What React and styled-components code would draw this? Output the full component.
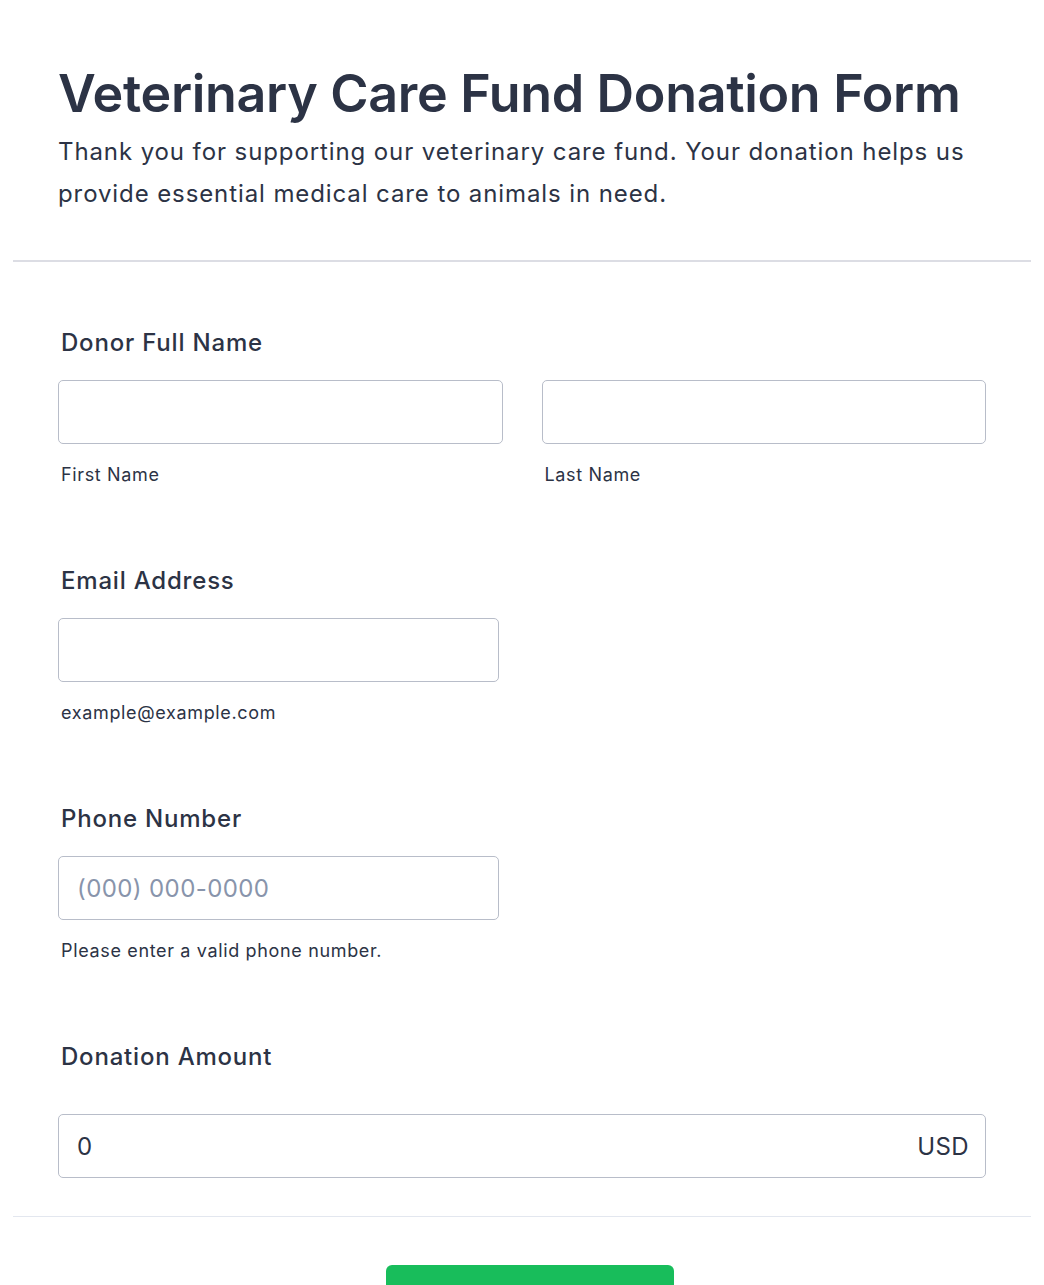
import styled, { createGlobalStyle } from 'styled-components'

const GlobalStyle = createGlobalStyle`
  body {
    margin: 0;
    background: #fff;
    font-family: Inter, "Noto Sans", sans-serif;
    color: #2c3345;
  }
  * { box-sizing: border-box; }
`

const Card = styled.div`
  margin: 0 13px;
  padding-bottom: 40px;
`

const Header = styled.header`
  padding: 63px 45px 45px;
  border-bottom: 2px solid #dcdde4;
`

const Title = styled.h1`
  margin: 0;
  font-size: 52px;
  line-height: 62px;
  font-weight: 600;
  letter-spacing: -0.32px;
`

const Description = styled.p`
  margin: 6px 0 0;
  font-size: 24px;
  line-height: 42px;
  font-weight: 400;
  letter-spacing: 0.9px;
`

const Fields = styled.div`
  padding: 66px 45px 38px;
  display: flex;
  flex-direction: column;
  gap: 80px;
`

const Field = styled.div`
  display: flex;
  flex-direction: column;
`

const Label = styled.label`
  font-size: 24px;
  line-height: 29px;
  font-weight: 500;
  letter-spacing: 0.8px;
  padding-left: 3px;
  margin-bottom: ${props => props.gap || 23}px;
`

const Row = styled.div`
  display: flex;
  gap: 39px;
`

const Col = styled.div`
  display: flex;
  flex-direction: column;
  width: ${props => props.width || 'auto'};
  flex: ${props => props.grow ? 1 : 'none'};
`

const Input = styled.div`
  height: 64px;
  border: 1px solid #b8bdc9;
  border-radius: 5px;
  background: #fff;
  display: flex;
  align-items: center;
  justify-content: space-between;
  padding: 0 16px 0 18px;
  font-size: 24px;
  letter-spacing: 0.4px;
  color: ${props => props.placeholder ? '#8894ab' : '#2c3345'};
`

const Sublabel = styled.span`
  margin-top: 20px;
  padding-left: 3px;
  font-size: 18px;
  line-height: 22px;
  letter-spacing: 0.65px;
`

const Footer = styled.div`
  border-top: 1px solid #e3e7ef;
  padding: 48px 0 0 16px;
  display: flex;
  justify-content: center;
`

const SubmitButton = styled.button`
  width: 288px;
  height: 60px;
  border: none;
  border-radius: 6px;
  background: #18bd5b;
  color: #fff;
  font-family: inherit;
  font-size: 24px;
  font-weight: 500;
`

const App = () => {
  return (
    <>
      <GlobalStyle />
      <Card>
        <Header>
          <Title>Veterinary Care Fund Donation Form</Title>
          <Description>
            Thank you for supporting our veterinary care fund. Your donation helps us provide essential medical care to animals in need.
          </Description>
        </Header>

        <Fields>
          <Field>
            <Label>Donor Full Name</Label>
            <Row>
              <Col grow>
                <Input />
                <Sublabel>First Name</Sublabel>
              </Col>
              <Col grow>
                <Input />
                <Sublabel>Last Name</Sublabel>
              </Col>
            </Row>
          </Field>

          <Field>
            <Label>Email Address</Label>
            <Col width="441px">
              <Input />
              <Sublabel>example@example.com</Sublabel>
            </Col>
          </Field>

          <Field>
            <Label>Phone Number</Label>
            <Col width="441px">
              <Input placeholder>(000) 000-0000</Input>
              <Sublabel>Please enter a valid phone number.</Sublabel>
            </Col>
          </Field>

          <Field>
            <Label gap={43}>Donation Amount</Label>
            <Input>
              <span>0</span>
              <span>USD</span>
            </Input>
          </Field>
        </Fields>

        <Footer>
          <SubmitButton>Submit</SubmitButton>
        </Footer>
      </Card>
    </>
  )
}

export default App
